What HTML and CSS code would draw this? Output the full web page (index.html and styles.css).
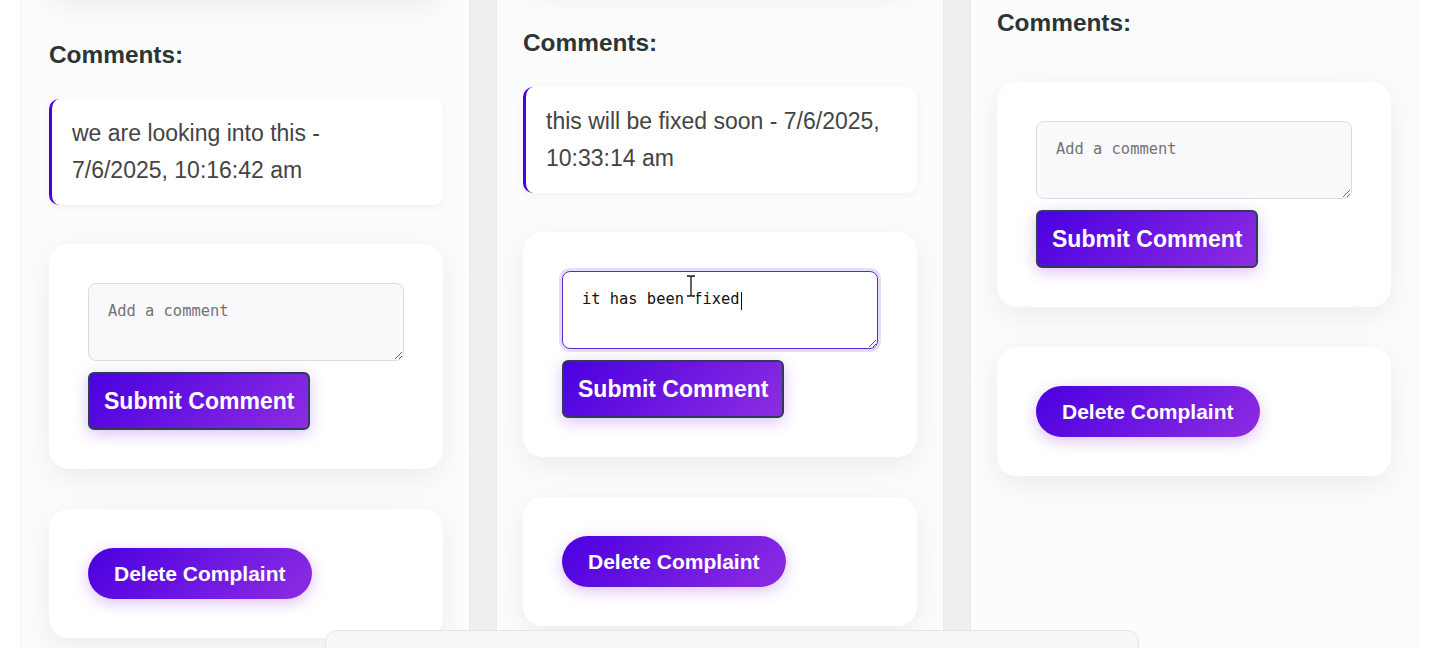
FILE: index.html
```html
<!DOCTYPE html>
<html lang="en">
<head>
<meta charset="utf-8">
<title>Complaints</title>
<link rel="stylesheet" href="styles.css">
</head>
<body>
<main class="board">
  <section class="column">
    <div class="summary summary-tall"></div>
    <h3 class="comments-title">Comments:</h3>
    <ul class="comment-list">
      <li class="comment">we are looking into this - 7/6/2025, 10:16:42 am</li>
    </ul>
    <form class="card comment-form">
      <div class="input-wrap">
        <textarea class="comment-input" placeholder="Add a comment"></textarea>
      </div>
      <button type="button" class="btn-submit">Submit Comment</button>
    </form>
    <div class="card delete-card">
      <button type="button" class="btn-delete">Delete Complaint</button>
    </div>
  </section>

  <section class="column">
    <div class="summary summary-mid"></div>
    <h3 class="comments-title">Comments:</h3>
    <ul class="comment-list">
      <li class="comment">this will be fixed soon - 7/6/2025, 10:33:14 am</li>
    </ul>
    <form class="card comment-form">
      <div class="input-wrap">
        <textarea class="comment-input is-focused" placeholder="Add a comment">it has been fixed</textarea>
        <span class="caret"></span>
        <svg class="ibeam" width="12" height="24" viewBox="0 0 12 24" aria-hidden="true">
          <path d="M2 2 H5 Q6 2 6 3 Q6 2 7 2 H10 M6 3 V21 M2 22 H5 Q6 22 6 21 Q6 22 7 22 H10" fill="none" stroke="#fff" stroke-width="3.2" stroke-linecap="round"/>
          <path d="M2 2 H5 Q6 2 6 3 Q6 2 7 2 H10 M6 3 V21 M2 22 H5 Q6 22 6 21 Q6 22 7 22 H10" fill="none" stroke="#111" stroke-width="1.3"/>
        </svg>
      </div>
      <button type="button" class="btn-submit">Submit Comment</button>
    </form>
    <div class="card delete-card">
      <button type="button" class="btn-delete">Delete Complaint</button>
    </div>
  </section>

  <section class="column">
    <div class="summary summary-short"></div>
    <h3 class="comments-title">Comments:</h3>
    <ul class="comment-list"></ul>
    <form class="card comment-form">
      <div class="input-wrap">
        <textarea class="comment-input" placeholder="Add a comment"></textarea>
      </div>
      <button type="button" class="btn-submit">Submit Comment</button>
    </form>
    <div class="card delete-card">
      <button type="button" class="btn-delete">Delete Complaint</button>
    </div>
  </section>
</main>
<div class="bottom-sheet"></div>
</body>
</html>
```

FILE: styles.css
```css
* {
  box-sizing: border-box;
}

html,
body {
  margin: 0;
  height: 100%;
  overflow: hidden;
  background: #ffffff;
  font-family: "Liberation Sans", Arial, sans-serif;
}

.board {
  display: grid;
  grid-template-columns: 447px 446px 446px;
  gap: 28px;
  width: 1395px;
  margin: -200px 0 0 22px;
  background: #efefef;
  box-shadow: 0 0 5px rgba(0, 0, 0, 0.045);
}

.column {
  display: flex;
  flex-direction: column;
  padding: 26px 26px 400px 27px;
  background: #fcfcfc;
  box-shadow: 0 0 4px rgba(0, 0, 0, 0.04);
}

.column + .column {
  padding-left: 26px;
}

.summary {
  flex: none;
  background: #ffffff;
  border-radius: 20px;
  margin-bottom: 48px;
  box-shadow: 0 12px 32px rgba(0, 0, 0, 0.07);
}

.summary-tall {
  height: 167px;
}

.summary-mid {
  height: 155px;
}

.summary-short {
  height: 135px;
}

.comments-title {
  margin: 0 0 30px;
  font-size: 24.4px;
  line-height: 28px;
  font-weight: 700;
  color: #2d3436;
}

.comment-list {
  list-style: none;
  margin: 0 0 15px;
  padding: 0;
}

.comment {
  margin: 0 0 24px;
  padding: 16px 24px 16px 20px;
  background: #ffffff;
  border-left: 3px solid #4a00e0;
  border-radius: 10px;
  font-size: 23px;
  line-height: 37px;
  color: #444444;
  box-shadow: 0 2px 10px rgba(0, 0, 0, 0.05);
}

.card {
  background: #ffffff;
  border-radius: 20px;
  padding: 39px;
  box-shadow: 0 8px 30px rgba(0, 0, 0, 0.07);
}

.comment-form {
  display: flex;
  flex-direction: column;
  align-items: flex-start;
  margin: 0;
}

.input-wrap {
  position: relative;
  width: 100%;
  margin-bottom: 11px;
}

.comment-input {
  display: block;
  width: 100%;
  height: 78px;
  padding: 18px 18px 18px 19px;
  border: 1px solid #dddddd;
  border-radius: 8px;
  background: #f9f9fb;
  font-family: "DejaVu Sans Mono", "Liberation Mono", monospace;
  font-size: 15.4px;
  line-height: 19px;
  color: #222222;
  resize: vertical;
  outline: none;
}

.comment-input::placeholder {
  color: #737373;
}

.comment-input.is-focused {
  background: #ffffff;
  border-color: #5b2bd0;
  box-shadow: 0 0 0 3px #e6ddfb;
  color: #111111;
}

.caret {
  position: absolute;
  left: calc(21px + 17ch);
  top: 21px;
  width: 1px;
  height: 18px;
  background: #111111;
  font-family: "DejaVu Sans Mono", "Liberation Mono", monospace;
  font-size: 15.4px;
}

.ibeam {
  position: absolute;
  left: 123px;
  top: 3px;
}

.btn-submit {
  padding: 14px;
  border: 2px solid #2c3e50;
  border-radius: 6px;
  background: linear-gradient(135deg, #4a00e0, #8e2de2);
  color: #ffffff;
  font-family: "Liberation Sans", Arial, sans-serif;
  font-size: 23px;
  line-height: 26px;
  font-weight: 700;
  box-shadow: 0 4px 15px rgba(142, 45, 226, 0.3);
}

.delete-card {
  margin-top: 40px;
  display: flex;
  align-items: flex-start;
}

.btn-delete {
  padding: 13px 26px;
  border: none;
  border-radius: 30px;
  background: linear-gradient(135deg, #4a00e0, #8e2de2);
  color: #ffffff;
  font-family: "Liberation Sans", Arial, sans-serif;
  font-size: 21px;
  line-height: 25px;
  font-weight: 700;
  box-shadow: 0 4px 15px rgba(142, 45, 226, 0.3);
}

.bottom-sheet {
  position: fixed;
  top: 630px;
  left: 325px;
  width: 814px;
  height: 80px;
  background: #f7f7f7;
  border: 1px solid #e4e4e4;
  border-radius: 12px 12px 0 0;
}
```
